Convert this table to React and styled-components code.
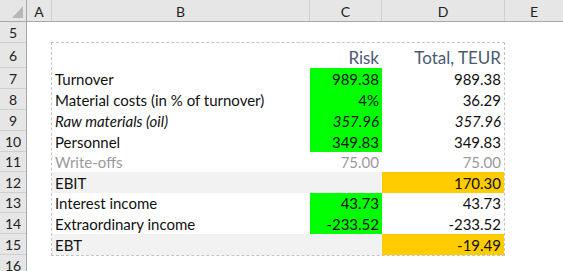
import React from "react";
import styled, { createGlobalStyle } from "styled-components";

const Global = createGlobalStyle`
  html, body { margin: 0; padding: 0; background: #fff; }
  body { font-family: Lato, "Open Sans", "Liberation Sans", sans-serif; overflow: hidden; }
`;

const COLS = { corner: 27, a: 25, b: 258, c: 72, d: 123 };

const Sheet = styled.div`
  width: 563px;
  height: 271px;
  display: grid;
  grid-template-columns: ${COLS.corner}px 1fr;
  grid-template-rows: 22px 1fr;
  background: #fff;
  overflow: hidden;
`;

const Corner = styled.div`
  position: relative;
  background: #e6e6e6;
  border-right: 1px solid #a8a8a8;
  border-bottom: 1px solid #a8a8a8;
  box-sizing: border-box;
`;

const CornerMark = styled.svg`
  position: absolute;
  right: 3px;
  bottom: 3px;
`;

const ColumnBar = styled.div`
  display: flex;
  background: #e6e6e6;
  border-bottom: 1px solid #a8a8a8;
  box-sizing: border-box;
`;

const ColHead = styled.div`
  width: ${(p) => (p.$w ? `${p.$w}px` : "auto")};
  flex: ${(p) => (p.$w ? "none" : "1")};
  box-sizing: border-box;
  border-right: ${(p) => (p.$last ? "none" : "1px solid #cfcfcf")};
  display: flex;
  align-items: center;
  justify-content: center;
  font-size: 14px;
  color: #222;
  padding-top: 1px;
`;

const RowHeads = styled.div`
  display: flex;
  flex-direction: column;
  background: #e6e6e6;
  border-right: 1px solid #a8a8a8;
  box-sizing: border-box;
`;

const RowHead = styled.div`
  height: ${(p) => p.$h}px;
  flex: none;
  box-sizing: border-box;
  border-bottom: 1px solid #cfcfcf;
  display: flex;
  align-items: center;
  justify-content: center;
  font-size: 14px;
  color: #222;
`;

const Canvas = styled.div`
  padding: 20px 0 0 ${COLS.a - 1}px;
`;

const Table = styled.div`
  display: inline-flex;
  flex-direction: column;
  border: 1px dashed #c4c4c4;
`;

const Row = styled.div`
  display: grid;
  grid-template-columns: ${COLS.b}px ${COLS.c}px ${COLS.d - 1}px;
  height: ${(p) => p.$h}px;
`;

const Cell = styled.div`
  display: flex;
  align-items: flex-end;
  justify-content: ${(p) => (p.$num ? "flex-end" : "flex-start")};
  padding: 0 ${(p) => (p.$num ? "3px" : "0")} 2px ${(p) => (p.$num ? "0" : "3px")};
  background: ${(p) => p.$bg || "transparent"};
  color: ${(p) => p.$color || "#111"};
  font-style: ${(p) => (p.$italic ? "italic" : "normal")};
  font-size: ${(p) => (p.$big ? "17px" : "15px")};
  line-height: 1;
  white-space: nowrap;
`;

const GREEN = "#00ff00";
const GOLD = "#ffcc00";
const SHADE = "#f2f2f2";
const HEAD = "#4a5a72";
const MUTED = "#9a9a9a";

const rows = [
  { label: "Turnover", risk: "989.38", total: "989.38", riskBg: GREEN, h: 21 },
  { label: "Material costs (in % of turnover)", risk: "4%", total: "36.29", riskBg: GREEN, h: 21 },
  { label: "Raw materials (oil)", risk: "357.96", total: "357.96", riskBg: GREEN, italic: true, h: 21 },
  { label: "Personnel", risk: "349.83", total: "349.83", riskBg: GREEN, h: 21 },
  { label: "Write-offs", risk: "75.00", total: "75.00", color: MUTED, h: 20 },
  { label: "EBIT", risk: "", total: "170.30", shade: true, h: 21 },
  { label: "Interest income", risk: "43.73", total: "43.73", riskBg: GREEN, h: 20 },
  { label: "Extraordinary income", risk: "-233.52", total: "-233.52", riskBg: GREEN, h: 21 },
  { label: "EBT", risk: "", total: "-19.49", shade: true, h: 21 },
];

const rowHeights = [
  [5, 21],
  [6, 25],
  ...rows.map((r, i) => [7 + i, r.h]),
  [16, 21],
];

export default function App() {
  return (
    <>
      <Global />
      <Sheet>
        <Corner>
          <CornerMark width="11" height="12" viewBox="0 0 11 12">
            <polygon points="11,0 11,12 0,12" fill="#b8b8b8" />
          </CornerMark>
        </Corner>
        <ColumnBar>
          <ColHead $w={COLS.a}>A</ColHead>
          <ColHead $w={COLS.b}>B</ColHead>
          <ColHead $w={COLS.c}>C</ColHead>
          <ColHead $w={COLS.d}>D</ColHead>
          <ColHead $last>E</ColHead>
        </ColumnBar>
        <RowHeads>
          {rowHeights.map(([n, h]) => (
            <RowHead key={n} $h={h}>
              {n}
            </RowHead>
          ))}
        </RowHeads>
        <Canvas>
          <Table>
            <Row $h={25}>
              <Cell />
              <Cell $num $big $color={HEAD}>Risk</Cell>
              <Cell $num $big $color={HEAD}>Total, TEUR</Cell>
            </Row>
            {rows.map((r) => (
              <Row key={r.label} $h={r.h}>
                <Cell $bg={r.shade ? SHADE : undefined} $color={r.color} $italic={r.italic}>
                  {r.label}
                </Cell>
                <Cell $num $bg={r.shade ? SHADE : r.riskBg} $color={r.color} $italic={r.italic}>
                  {r.risk}
                </Cell>
                <Cell $num $bg={r.shade ? GOLD : undefined} $color={r.color} $italic={r.italic}>
                  {r.total}
                </Cell>
              </Row>
            ))}
          </Table>
        </Canvas>
      </Sheet>
    </>
  );
}
